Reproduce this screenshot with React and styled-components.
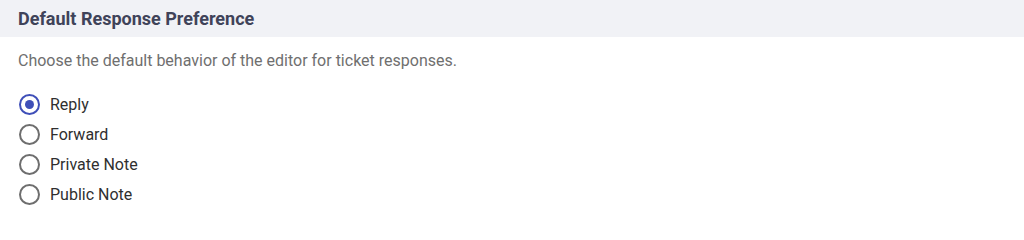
import React, { useState } from 'react';
import styled, { createGlobalStyle } from 'styled-components';

const GlobalStyle = createGlobalStyle`
  body {
    margin: 0;
    background: #fff;
    font-family: Roboto, "Liberation Sans", sans-serif;
  }
`;

const Section = styled.section`
  width: 1024px;
  height: 212px;
  overflow: hidden;
`;

const Header = styled.div`
  background: #f1f2f6;
  height: 37px;
  padding: 0 18px;
  display: flex;
  align-items: center;
`;

const Title = styled.h2`
  margin: 0;
  font-size: 18px;
  font-weight: 700;
  color: #3f4359;
`;

const Body = styled.div`
  padding: 14px 18px 0;
`;

const Description = styled.p`
  margin: 0 0 18px;
  font-size: 16px;
  line-height: 20px;
  color: #6f6f6f;
`;

const Options = styled.div`
  display: flex;
  flex-direction: column;
`;

const Option = styled.label`
  display: flex;
  align-items: center;
  height: 30px;
  gap: 10px;
  cursor: pointer;
  font-size: 16px;
  color: #2f2f2f;
`;

const HiddenInput = styled.input`
  position: absolute;
  opacity: 0;
  pointer-events: none;
`;

const Circle = styled.span`
  box-sizing: border-box;
  width: 21px;
  height: 21px;
  margin-left: 1px;
  border-radius: 50%;
  border: 2px solid ${p => (p.$checked ? '#3f4fb8' : '#6e6e6e')};
  display: flex;
  align-items: center;
  justify-content: center;

  &::after {
    content: '';
    width: 9px;
    height: 9px;
    border-radius: 50%;
    background: #3f4fb8;
    display: ${p => (p.$checked ? 'block' : 'none')};
  }
`;

const choices = ['Reply', 'Forward', 'Private Note', 'Public Note'];

export default function App() {
  const [value, setValue] = useState('Reply');

  return (
    <Section>
      <GlobalStyle />
      <Header>
        <Title>Default Response Preference</Title>
      </Header>
      <Body>
        <Description>Choose the default behavior of the editor for ticket responses.</Description>
        <Options>
          {choices.map(c => (
            <Option key={c}>
              <HiddenInput
                type="radio"
                name="pref"
                checked={value === c}
                onChange={() => setValue(c)}
              />
              <Circle $checked={value === c} />
              {c}
            </Option>
          ))}
        </Options>
      </Body>
    </Section>
  );
}
